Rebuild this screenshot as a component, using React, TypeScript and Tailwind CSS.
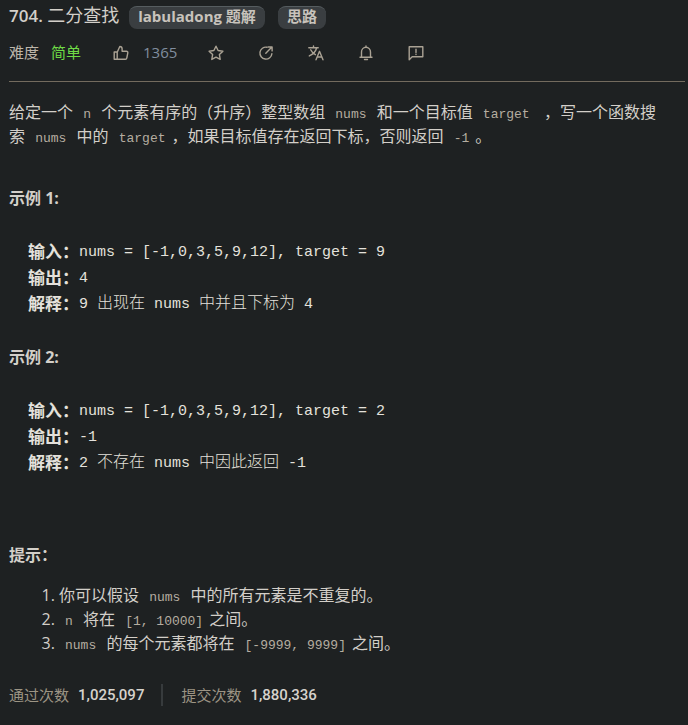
import type { ReactNode } from "react";

const sans = "font-['Open_Sans','Noto_Sans_CJK_SC',sans-serif]";
const mono = "font-['Liberation_Mono','Noto_Sans_CJK_SC',monospace]";

function Icon({ children }: { children: ReactNode }) {
  return (
    <svg
      viewBox="0 0 16 16"
      className="size-4"
      fill="none"
      stroke="currentColor"
      strokeWidth="1.4"
      strokeLinejoin="round"
      strokeLinecap="round"
      aria-hidden="true"
    >
      {children}
    </svg>
  );
}

function IconButton({ label, children }: { label: string; children: ReactNode }) {
  return (
    <button type="button" aria-label={label} className="flex items-center text-[#aaa294]">
      <Icon>{children}</Icon>
    </button>
  );
}

function Badge({ children }: { children: ReactNode }) {
  return (
    <button
      type="button"
      className="h-[23px] rounded-lg border-t border-[#565d60] bg-[#3a3e41] px-[9px] pb-1 text-[15px] leading-[18px] font-bold text-[#c8c3bc]"
    >
      {children}
    </button>
  );
}

function Code({ children }: { children: ReactNode }) {
  return <code className={`${mono} px-1.5 text-[13px] leading-4 text-[#b5ada0]`}>{children}</code>;
}

function Cjk({ children }: { children: ReactNode }) {
  return <span className="text-base leading-none font-light">{children}</span>;
}

function Heading({ children }: { children: ReactNode }) {
  return <h2 className="text-base leading-6 font-bold">{children}</h2>;
}

function Example({ input, output, note }: { input: string; output: string; note: ReactNode }) {
  const rows: [string, ReactNode][] = [
    ["输入：", input],
    ["输出：", output],
    ["解释：", note],
  ];
  return (
    <pre className={`${mono} pl-[19px] text-[15px] text-[#e4e1dc]`}>
      {rows.map(([name, value]) => (
        <div key={name} className="flex h-[26px] items-center">
          <strong className="text-[17px] leading-none">{name}</strong>
          <span>{value}</span>
        </div>
      ))}
    </pre>
  );
}

export default function App() {
  return (
    <main className={`${sans} min-h-screen bg-[#1e2122] pt-1.5 pr-[3px] pl-[9px] text-base text-[#d3cfc9]`}>
      <header className="border-b border-[#736b5e] pb-4">
        <div className="flex items-start">
          <h1 className="mr-2.5 text-lg leading-[18px]">
            <span className="text-[17px] font-semibold">704. </span>二分查找
          </h1>
          <div className="flex gap-[13px]">
            <Badge>labuladong 题解</Badge>
            <Badge>思路</Badge>
          </div>
        </div>
        <div className="mt-[11px] flex h-[25px] items-center text-[15px]">
          <span className="mr-3 text-[#bdb6aa]">难度</span>
          <span className="text-[#6fdc46]">简单</span>
          <button type="button" aria-label="点赞 1365" className="mr-[31px] ml-8 flex items-center gap-3.5 text-[#aaa294]">
            <Icon>
              <path d="M1.2 7h3v7.3h-3zM4.2 7.2l2.6-5.7c1.4 0 2.3.9 2.3 2.2v2.5h4.3c1 0 1.6.8 1.4 1.7l-1 5.1c-.1.8-.8 1.3-1.5 1.3H4.2" />
            </Icon>
            <span className="text-[#808d9e]">1365</span>
          </button>
          <div className="flex gap-[34px]">
            <IconButton label="收藏">
              <path d="M8 1.2l2.1 4.3 4.8.7-3.5 3.4.8 4.8L8 12.1l-4.2 2.3.8-4.8L1.1 6.2l4.8-.7z" />
            </IconButton>
            <IconButton label="分享">
              <path d="M9 2.2A6 6 0 1 0 13.9 8.6M7.8 8.2l5.6-5.6M10.2 2h3.9v3.9" />
            </IconButton>
            <IconButton label="切换语言">
              <path d="M.8 2.8h9.4M5.5 1v1.8M8.6 3C7.8 6.2 4.8 9.3 1.3 10.9M2.7 4.8c1 2.2 2.5 3.7 4.7 4.9M8 14.8l3.5-8.5 3.5 8.5M9.2 12h4.6" />
            </IconButton>
            <IconButton label="通知">
              <path d="M2 12.2h12M3.5 12V7a4.5 4.8 0 0 1 9 0v5M8 1v1.2M6.5 14.5h3" />
            </IconButton>
            <IconButton label="反馈">
              <path d="M1.2 14.7V1.8h13.6v10H4.2zM8 4.2v3.4M8 9.1v.4" />
            </IconButton>
          </div>
        </div>
      </header>

      <article className="pt-[18px] pr-5">
        <p className="leading-6">
          给定一个 <Code>n</Code> 个元素有序的（升序）整型数组 <Code>nums</Code> 和一个目标值 <Code>target</Code>
          {"\u00a0"} ，写一个函数搜索 <Code>nums</Code> 中的 <Code>target</Code>，如果目标值存在返回下标，否则返回{" "}
          <Code>-1</Code>。
        </p>

        <div className="mt-[38px]">
          <Heading>示例 1:</Heading>
        </div>
        <div className="mt-[30px]">
          <Example
            input="nums = [-1,0,3,5,9,12], target = 9"
            output="4"
            note={
              <>
                9 <Cjk>出现在</Cjk> nums <Cjk>中并且下标为</Cjk> 4
              </>
            }
          />
        </div>

        <div className="mt-[27px]">
          <Heading>示例 2:</Heading>
        </div>
        <div className="mt-[30px]">
          <Example
            input="nums = [-1,0,3,5,9,12], target = 2"
            output="-1"
            note={
              <>
                2 <Cjk>不存在</Cjk> nums <Cjk>中因此返回</Cjk> -1
              </>
            }
          />
        </div>

        <div className="mt-[66px]">
          <Heading>提示：</Heading>
        </div>
        <ol className="mt-4 list-decimal pl-[50px] leading-6">
          <li>
            你可以假设 <Code>nums</Code> 中的所有元素是不重复的。
          </li>
          <li>
            <Code>n</Code> 将在 <Code>[1, 10000]</Code>之间。
          </li>
          <li>
            <Code>nums</Code> 的每个元素都将在 <Code>[-9999, 9999]</Code>之间。
          </li>
        </ol>
      </article>

      <footer className="mt-7 flex h-6 items-center text-[15px] text-[#9c9484]">
        <span>通过次数</span>
        <span className="ml-[9px] font-['Roboto',sans-serif] font-medium text-[#d6d2cc]">1,025,097</span>
        <span className="mx-[17px] h-[22px] w-0.5 bg-[#373b3d]" />
        <span className="ml-px">提交次数</span>
        <span className="ml-[9px] font-['Roboto',sans-serif] font-medium text-[#d6d2cc]">1,880,336</span>
      </footer>
    </main>
  );
}
